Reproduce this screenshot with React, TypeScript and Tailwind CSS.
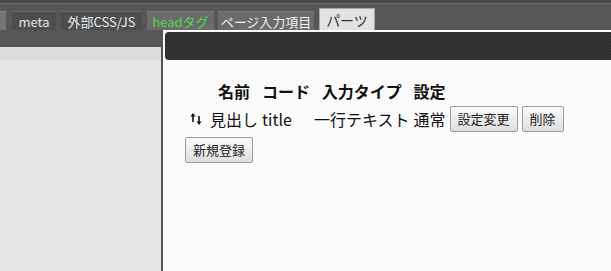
import React from "react";

const font = { fontFamily: '"Noto Sans CJK JP", "Noto Sans", sans-serif' };

function SortIcon() {
  return (
    <svg width="12" height="14" viewBox="0 0 12 14" className="block">
      <path d="M3 1 L5.6 4.4 H3.8 V10 H2.2 V4.4 H0.4 Z" fill="#111" />
      <path d="M9 13 L11.6 9.6 H9.8 V4 H8.2 V9.6 H6.4 Z" fill="#111" />
    </svg>
  );
}

function Btn({ children }: { children: React.ReactNode }) {
  return (
    <button className="h-[26px] px-[7px] border border-[#9c9c9c] rounded-[2px] bg-[linear-gradient(#fbfbfb,#dedede)] text-[13px] leading-[24px] text-[#222] whitespace-nowrap">
      {children}
    </button>
  );
}

export default function App() {
  return (
    <div
      className="relative w-[611px] h-[271px] overflow-hidden bg-[#e6e6e6]"
      style={font}
    >
      {/* header bar */}
      <div className="h-[47px] bg-[#575757] flex flex-col">
        <div className="h-[3px] bg-[#4a4a4a]" />
        <div className="h-px bg-[#6a6a6a]" />
        <div className="h-[26px] flex items-end gap-[5px] text-[13px]">
          <div className="w-[6px] h-[19px] bg-[#747474] border-t border-[#888]" />
          <div className="ml-[1px] w-[44px] h-[19px] bg-[#4e4e4e] border-t border-[#6a6a6a] text-[#e4e4e4] flex items-center justify-center leading-none">
            meta
          </div>
          <div className="w-[81px] h-[19px] bg-[#4e4e4e] border-t border-[#6a6a6a] text-[#e8ecf2] flex items-center justify-center leading-none">
            外部CSS/JS
          </div>
          <div className="w-[67px] h-[19px] bg-[#6b6b6b] border-t border-[#7c7c7c] text-[#4fd84f] flex items-center justify-center leading-none">
            headタグ
          </div>
          <div className="-ml-[1px] w-[96px] h-[19px] bg-[#6b6b6b] border-t border-[#7c7c7c] text-[#f0f0f0] flex items-center justify-center leading-none">
            ページ入力項目
          </div>
          <div className="w-[56px] h-[22px] bg-[#e2e2e2] border border-b-0 border-[#a8a8a8] text-[#333] text-[14px] flex items-center justify-center leading-none">
            パーツ
          </div>
        </div>
      </div>
      <div className="h-[13px] bg-[#dcdcdc]" />

      {/* dialog */}
      <div className="absolute left-[161px] top-[30px] right-[-20px] bottom-[-20px] bg-[#fafafa] border-l-2 border-[#555] pt-[2px] pl-[2px]">
        <div className="h-[28px] rounded-[4px] bg-[#323232] bg-[radial-gradient(#2b2b2b_1px,transparent_1px)] bg-[length:3px_3px]" />
        <div className="pl-[20px] pt-[18px] text-[16px] text-[#111]">
          <table className="ml-[2px] border-separate border-spacing-[2px]">
            <thead>
              <tr className="h-[22px]">
                <th className="px-[1px]" />
                <th className="px-[1px] font-bold leading-[20px]">名前</th>
                <th className="px-[1px] font-bold leading-[20px]">コード</th>
                <th className="px-[1px] font-bold leading-[20px]">入力タイプ</th>
                <th className="px-[1px] font-bold leading-[20px]">設定</th>
                <th />
                <th />
              </tr>
            </thead>
            <tbody>
              <tr>
                <td className="pl-[1px] pr-[5px] py-[1px] align-middle">
                  <SortIcon />
                </td>
                <td className="px-[1px] py-[1px] leading-[20px] whitespace-nowrap">見出し</td>
                <td className="px-[1px] py-[1px] leading-[20px]">title</td>
                <td className="px-[1px] py-[1px] leading-[20px] whitespace-nowrap">一行テキスト</td>
                <td className="px-[1px] py-[1px] leading-[20px]">通常</td>
                <td className="px-[1px] py-[1px]">
                  <Btn>設定変更</Btn>
                </td>
                <td className="px-[1px] py-[1px]">
                  <Btn>削除</Btn>
                </td>
              </tr>
            </tbody>
          </table>
          <div className="mt-[1px]">
            <Btn>新規登録</Btn>
          </div>
        </div>
      </div>
    </div>
  );
}
